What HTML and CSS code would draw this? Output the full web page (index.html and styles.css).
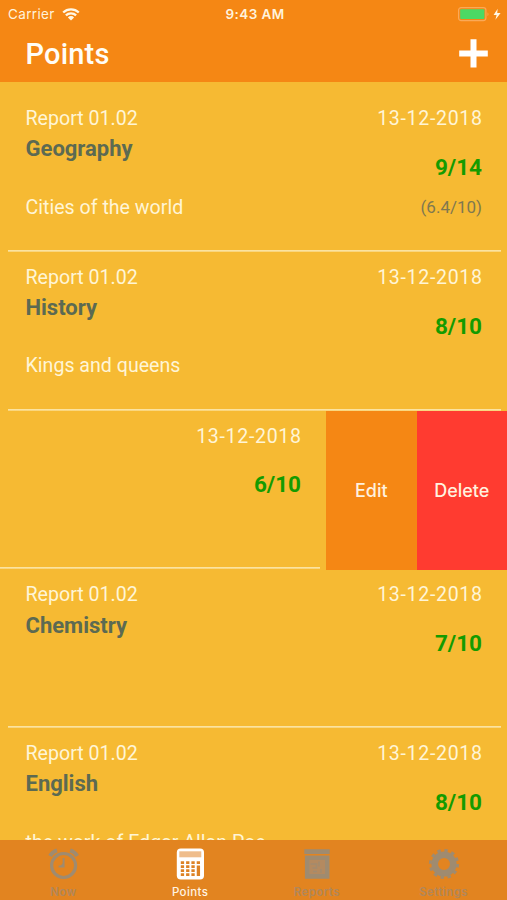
FILE: index.html
```html
<!DOCTYPE html>
<html lang="en">
<head>
<meta charset="utf-8">
<title>Points</title>
<link rel="stylesheet" href="styles.css">
</head>
<body>
<div class="app">
  <header class="header">
    <div class="status">
      <div class="carrier"><span>Carrier</span>
        <svg class="wifi" width="18" height="13" viewBox="0 0 18 13" fill="none" stroke="#fff8e6" stroke-width="2.3"><path d="M1.2 4.5a11.3 11.3 0 0 1 15.6 0M3.9 7.4a7.3 7.3 0 0 1 10.2 0"/><path d="M9 12.5 5.9 9.4a4.4 4.4 0 0 1 6.2 0z" fill="#fff8e6" stroke="none"/></svg>
      </div>
      <time class="clock">9:43 AM</time>
      <svg class="battery" width="44" height="15" viewBox="0 0 44 15"><rect x=".6" y=".6" width="27.3" height="13" rx="2.5" fill="none" stroke="#fba957" stroke-width="1.2"/><rect x="2.2" y="2.2" width="24.2" height="9.8" rx="1" fill="#4cd964"/><path d="M29.5 5.2q2 2 0 4z" fill="#fba957"/><path d="M39.7 1.8 35.6 8h3l-1.2 4.8L42.6 6h-3.4z" fill="#fff8e6"/></svg>
    </div>
    <div class="titlebar">
      <h1>Points</h1>
      <svg width="29" height="29" viewBox="0 0 29 29"><path d="M14.5.2v28.4M.2 14.4h28.6" stroke="#fff" stroke-width="6"/></svg>
    </div>
  </header>
  <main class="list">
    <article class="row">
      <div class="main"><span class="report">Report 01.02</span><h2>Geography</h2><p>Cities of the world</p></div>
      <div class="result"><time>13-12-2018</time><strong>9/14</strong><small>(6.4/10)</small></div>
    </article>
    <article class="row">
      <div class="main"><span class="report">Report 01.02</span><h2>History</h2><p>Kings and queens</p></div>
      <div class="result"><time>13-12-2018</time><strong>8/10</strong></div>
    </article>
    <div class="swiped">
      <article class="row shifted">
        <div class="result"><time>13-12-2018</time><strong>6/10</strong></div>
      </article>
      <button class="action edit">Edit</button>
      <button class="action delete">Delete</button>
    </div>
    <article class="row">
      <div class="main"><span class="report">Report 01.02</span><h2>Chemistry</h2></div>
      <div class="result"><time>13-12-2018</time><strong>7/10</strong></div>
    </article>
    <article class="row">
      <div class="main"><span class="report">Report 01.02</span><h2>English</h2><p>the work of Edgar Allan Poe</p></div>
      <div class="result"><time>13-12-2018</time><strong>8/10</strong></div>
    </article>
  </main>
  <nav class="tabs">
    <a class="tab">
      <svg width="32" height="32" viewBox="0 0 32 32" fill="none" stroke="currentColor"><circle cx="16.600" cy="17.500" r="12" stroke-width="3.200"/><path d="M3 8Q5.500 3.800 10 2.400M30.200 8Q27.700 3.800 23.200 2.400" stroke-width="4"/><path d="M16.600 10v8.500h-5" stroke-width="1.900"/><path d="M16.600 14.500v4.500h-4.200z" fill="currentColor" stroke="none"/></svg>
      <span>Now</span>
    </a>
    <a class="tab active">
      <svg width="32" height="32" viewBox="0 0 32 32"><rect x="2.800" y=".4" width="27.200" height="31" rx="4" fill="#fff"/><path d="M5.300 3.300h22v6h-22z" fill="#efbd8c"/><path d="M6.800 14.700H28M6.800 18.700H22M6.800 22.700H22M6.800 26.700H22" stroke="#dd8226" stroke-width="2.700" stroke-dasharray="3.300 2"/><path d="M24.400 17.500v10.500" stroke="#dd8226" stroke-width="3.300"/></svg>
      <span>Points</span>
    </a>
    <a class="tab">
      <svg width="32" height="32" viewBox="0 0 32 32"><path d="M3.300 1.200h25.400v4.800H3.300zM3.900 7.500h24.600v23.200H3.900z" fill="currentColor"/><path d="M8.500 11.800h15.500v14.200H8.500z" fill="#b48a60"/><path d="M9.500 16h6v4h-4M18 13.500v5M20 21v4M12 23.500h4" fill="none" stroke="#a38b6e" stroke-width="1.600"/></svg>
      <span>Reports</span>
    </a>
    <a class="tab">
      <svg width="32" height="32" viewBox="0 0 32 32" fill="none" stroke="currentColor"><circle cx="16" cy="16" r="9.300" stroke-width="6.600"/><circle cx="16" cy="16" r="13.500" stroke-width="3.200" stroke-dasharray="3.400 3.668"/></svg>
      <span>Settings</span>
    </a>
  </nav>
</div>
</body>
</html>
```

FILE: styles.css
```css
* { box-sizing: border-box; }
body { margin: 0; background: #f6ba33; font-family: Roboto, sans-serif; color: #fff5d6; }
h1, h2, p { margin: 0; }
.app { height: 900px; display: flex; flex-direction: column; overflow: hidden; }
.header { flex: none; height: 81.500px; background: #f58714; }
.status { height: 27px; padding: 0 5px 0 8px; display: grid; grid-template-columns: 1fr auto 1fr; align-items: center; font: 13.500px/27px Inter, sans-serif; color: #fff3dc; }
.carrier { display: flex; align-items: center; gap: 7px; letter-spacing: .35px; }
.carrier span, .clock { padding-top: 1px; }
.clock { font-weight: 600; letter-spacing: .6px; }
.battery { justify-self: end; }
.clock { letter-spacing: .4px; }
.titlebar { height: 53px; padding: 0 19.500px 0 25.500px; display: flex; justify-content: space-between; align-items: center; color: #fffdf6; }
h1 { font-size: 29px; line-height: 40px; font-weight: 500; letter-spacing: .2px; }
.list { flex: 1; min-height: 0; overflow: hidden; padding-top: 11.900px; }
.row { height: 158.800px; padding: 13.700px 25px 0 25.500px; display: flex; justify-content: space-between; background: linear-gradient(#fbe3a0, #fbe3a0) no-repeat 7.500px 156.500px / calc(100% - 14px) 1.700px; }
.main, .result { display: flex; flex-direction: column; white-space: nowrap; }
.result { align-items: flex-end; margin-left: auto; }
.report, .main p, .result time { font-size: 19.600px; line-height: 24px; }
.main p { margin-top: 31.300px; }
h2 { margin-top: 3.200px; font-size: 22px; line-height: 30px; font-weight: 700; color: #5c6a52; }
.result time { letter-spacing: .65px; margin-right: -.65px; }
.result strong { margin-top: 20.800px; font-size: 22.500px; line-height: 30px; font-weight: 700; color: #149b00; }
.result small { margin-top: 13.300px; font-size: 17px; line-height: 24px; color: #7f7850; }
.swiped { height: 158.800px; display: flex; }
.shifted { flex: 1; background-position: 0 156.500px; background-size: calc(100% - 6px) 1.700px; }
.action { width: 90.500px; border: 0; padding: 0; font: 500 18px Inter, sans-serif; color: #fff1df; }
.edit { background: #f58714; }
.delete { background: #ff3b30; }
.tabs { flex: none; height: 60.500px; background: #e28420; display: grid; grid-template-columns: repeat(4, 1fr); }
.tab { padding-top: 8px; display: flex; flex-direction: column; align-items: center; color: #9f8b70; font: 500 11.500px/16px Inter, sans-serif; }
.tab span { margin-top: 4px; letter-spacing: .4px; }
.tab:not(.active) span { color: #b1875a; font-weight: 600; }
.tab.active { color: #fff3e0; }
```
